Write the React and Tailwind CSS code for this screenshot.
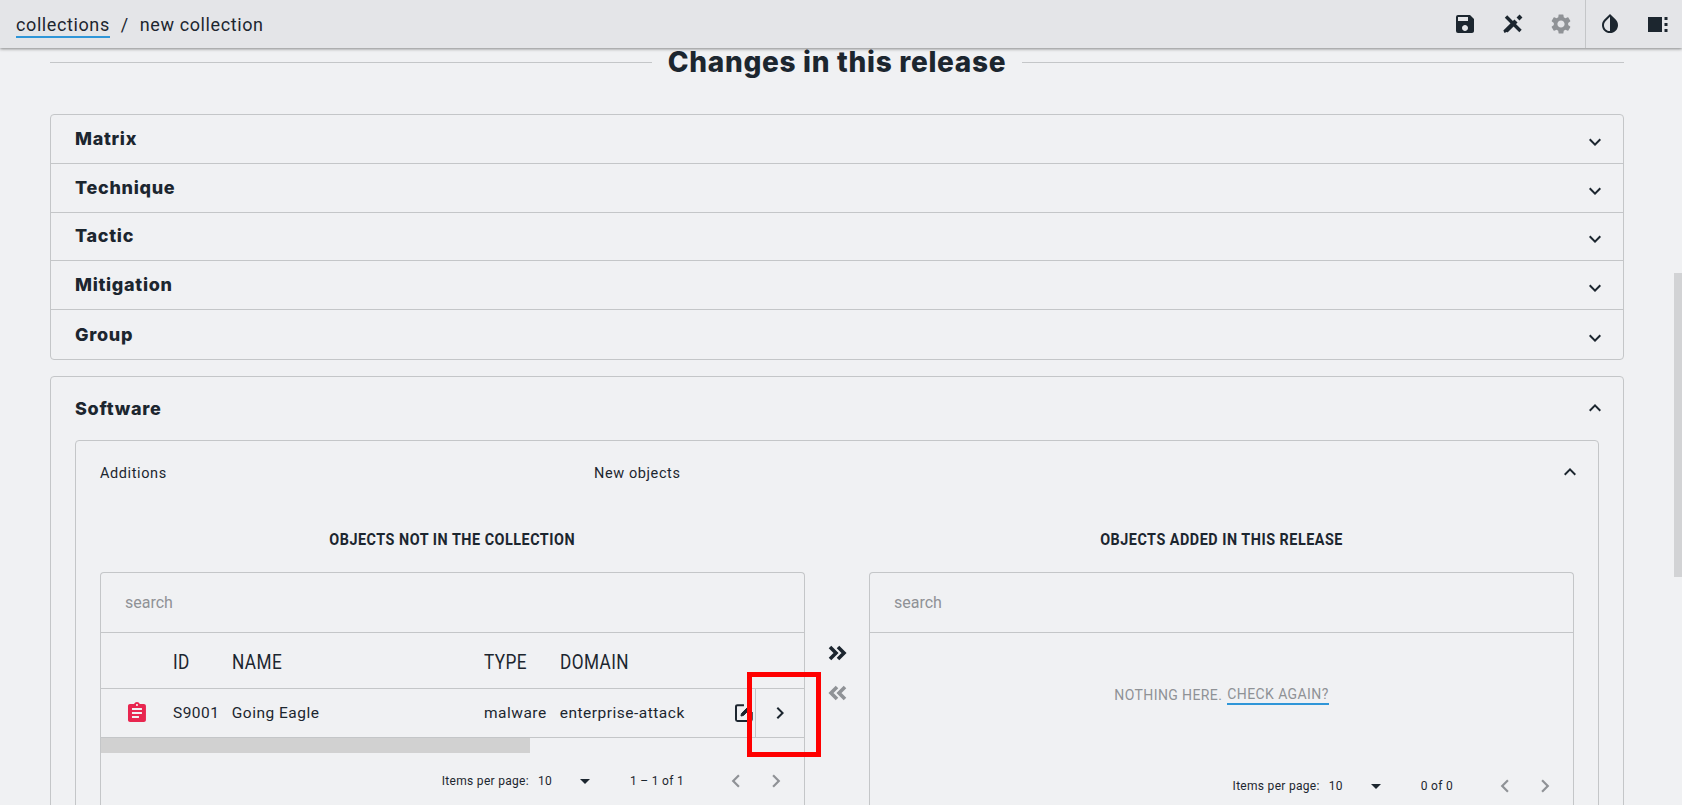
import React from "react";
import {
  MdSave, MdSettings, MdInvertColors, MdAssignment,
  MdKeyboardArrowDown, MdKeyboardArrowUp, MdChevronLeft, MdChevronRight,
  MdArrowDropDown,
} from "react-icons/md";

const roboto = { fontFamily: "Roboto, sans-serif" };
const display = { fontFamily: "Inter, sans-serif" };

function ToolIcon() {
  return (
    <svg width="24" height="24" viewBox="0 0 24 24" fill="none" stroke="#1c262f" strokeWidth="3">
      <path d="M5 4.5 L19.5 19" strokeWidth="3.4" />
      <path d="M5.5 20 L5 19 L15 9" strokeWidth="4.4" />
      <path d="M17 7 L20 4" strokeWidth="4" />
    </svg>
  );
}

function PanelIcon() {
  return (
    <svg width="20" height="15" viewBox="0 0 20 15" fill="#1c262f">
      <rect x="0" y="0" width="14" height="15" />
      <rect x="16.5" y="0" width="3" height="3" />
      <rect x="16.5" y="6" width="3" height="3" />
      <rect x="16.5" y="12" width="3" height="3" />
    </svg>
  );
}

function EditIcon() {
  return (
    <svg width="20" height="20" viewBox="0 0 20 20" fill="none" stroke="#1c262f">
      <path d="M10 2.2 H3.5 A1.5 1.5 0 0 0 2 3.7 V16.5 A1.5 1.5 0 0 0 3.5 18 H16.3 A1.5 1.5 0 0 0 17.8 16.5 V9" strokeWidth="2" />
      <path d="M7 13 L7.5 10.5 L15 3 L17 5 L9.5 12.5 Z" fill="#1c262f" strokeWidth="1" />
    </svg>
  );
}

function DoubleRight() {
  return (
    <svg width="20" height="16" viewBox="0 0 20 16" fill="none" stroke="currentColor" strokeWidth="3.6">
      <path d="M2 2 L8 8 L2 14" />
      <path d="M10 2 L16 8 L10 14" />
    </svg>
  );
}

function DoubleLeft() {
  return (
    <svg width="20" height="16" viewBox="0 0 20 16" fill="none" stroke="currentColor" strokeWidth="3.6">
      <path d="M10 2 L4 8 L10 14" />
      <path d="M18 2 L12 8 L18 14" />
    </svg>
  );
}

function Paginator({ range, className }) {
  return (
    <div className={"flex items-center justify-end pr-2 text-[12px] tracking-[0.3px] text-[#1c262f] " + className}>
      <span>Items per page:</span>
      <span className="ml-[9px] w-[35px]">10</span>
      <MdArrowDropDown size={24} className="mr-[33px]" />
      <span>{range}</span>
      <div className="ml-[32px] flex text-[#8f9296]">
        <span className="flex w-10 justify-center"><MdChevronLeft size={26} /></span>
        <span className="flex w-10 justify-center"><MdChevronRight size={26} /></span>
      </div>
    </div>
  );
}

function SearchRow() {
  return (
    <div className="flex h-[60px] items-center border-b border-[#c4c6c8] pl-6 pt-[1px] text-[16px] text-[#8f9296]">
      search
    </div>
  );
}

function Accordion({ title }) {
  return (
    <div className="flex h-[48.8px] items-center justify-between border-b border-[#c4c6c8] pl-6 pr-[16px] last:border-b-0">
      <span className="pb-[1px] text-[18px] font-extrabold tracking-[0.7px]" style={display}>{title}</span>
      <MdKeyboardArrowDown size={24} className="mt-[6px]" />
    </div>
  );
}

function Condensed({ children, className }) {
  return <span className={"inline-block origin-left scale-x-[0.86] whitespace-nowrap " + className}>{children}</span>;
}

function ListTitle({ children }) {
  return (
    <div className="h-[45px] text-center">
      <h2 className="inline-block scale-x-[0.87] whitespace-nowrap text-[16.5px] font-bold leading-[20px] tracking-[0.6px]">{children}</h2>
    </div>
  );
}

export default function App() {
  return (
    <div className="relative flex h-screen flex-col overflow-hidden bg-[#f0f1f3] text-[#1c262f]" style={roboto}>
      <header className="relative z-10 flex h-[48px] shrink-0 items-center justify-between bg-[#e4e5e8] pl-4 shadow-[0_1px_3px_rgba(0,0,0,0.45)]">
        <div className="flex items-baseline text-[18px] tracking-[0.6px]">
          <span className="border-b-2 border-[#2f96d8] leading-[22px]">collections</span>
          <span className="mx-[11px]">/</span>
          <span>new collection</span>
        </div>
        <div className="flex h-full items-center">
          <MdSave size={24} />
          <span className="ml-[24px]"><ToolIcon /></span>
          <MdSettings size={24} className="ml-[24px] text-[#8f9296]" />
          <div className="ml-[12px] flex h-full items-center border-l border-[#c4c6c8] pl-[12px] pr-[14px]">
            <MdInvertColors size={24} />
            <span className="ml-[26px]"><PanelIcon /></span>
          </div>
        </div>
      </header>

      <main className="min-h-0 flex-1 pl-[50px] pr-[58px]">
        <div className="flex h-[28px] items-center gap-4">
          <div className="h-px flex-1 bg-[#c4c6c8]" />
          <h1 className="text-[28px] font-extrabold leading-[28px] tracking-[0.7px]" style={display}>Changes in this release</h1>
          <div className="h-px flex-1 bg-[#c4c6c8]" />
        </div>

        <div className="mt-[38px] rounded border border-[#c4c6c8]">
          {["Matrix", "Technique", "Tactic", "Mitigation", "Group"].map((t) => (
            <Accordion key={t} title={t} />
          ))}
        </div>

        <section className="mt-[16px] rounded border border-[#c4c6c8] px-6">
          <div className="flex h-[63px] items-center justify-between">
            <span className="text-[18px] font-extrabold tracking-[0.7px]" style={display}>Software</span>
            <MdKeyboardArrowUp size={24} className="mr-[-8px]" />
          </div>

          <div className="rounded border border-[#c4c6c8] px-6">
            <div className="flex h-[66px] items-center justify-between text-[14.5px] tracking-[0.6px]">
              <div className="flex">
                <span className="w-[494px]">Additions</span>
                <span>New objects</span>
              </div>
              <MdKeyboardArrowUp size={24} className="mr-[-8px] mb-[4px]" />
            </div>

            <div className="grid grid-cols-[705px_64px_705px] pt-[21px]">
              <div>
                <ListTitle>OBJECTS NOT IN THE COLLECTION</ListTitle>
                <div className="-mt-[1px] rounded border border-b-0 border-[#c4c6c8]">
                  <SearchRow />
                  <div className="flex h-[56px] items-center border-b border-[#c4c6c8] pt-[3px] text-[20px] tracking-[0.5px]">
                    <Condensed className="ml-[72px] w-[59px]">ID</Condensed>
                    <Condensed className="w-[252px]">NAME</Condensed>
                    <Condensed className="w-[76px]">TYPE</Condensed>
                    <Condensed>DOMAIN</Condensed>
                  </div>
                  <div className="flex h-[49px] items-center border-b border-[#c4c6c8] text-[15.5px] tracking-[0.5px]">
                    <MdAssignment size={24} className="ml-[24px] mr-[24px] text-[#e8264f]" />
                    <span className="w-[59px] pt-[1px]">S9001</span>
                    <span className="w-[253px] pt-[1px]">Going Eagle</span>
                    <span className="w-[76px] pt-[1px]">malware</span>
                    <span className="w-[175px] whitespace-nowrap pt-[1px]">enterprise-attack</span>
                    <EditIcon />
                    <span className="ml-[1px] flex h-full w-[49px] items-center justify-center border-l border-[#c4c6c8]">
                      <MdChevronRight size={24} />
                    </span>
                  </div>
                  <div className="h-[15px] w-[429px] bg-[#d1d1d1]" />
                  <Paginator range="1 – 1 of 1" className="h-[56px]" />
                </div>
              </div>

              <div className="flex flex-col items-center pt-[70px] text-[#1c262f]">
                <span className="ml-[2px] mt-[47px] flex"><DoubleRight /></span>
                <span className="mt-[24px] flex text-[#8f9296]"><DoubleLeft /></span>
              </div>

              <div>
                <ListTitle>OBJECTS ADDED IN THIS RELEASE</ListTitle>
                <div className="-mt-[1px] rounded border border-b-0 border-[#c4c6c8]">
                  <SearchRow />
                  <div className="flex h-[125px] items-center justify-center text-[14px] tracking-[0.4px] text-[#8f9296]">
                    <span>NOTHING HERE.</span>
                    <span className="ml-[5px] border-b-2 border-[#2f96d8] leading-[18px]">CHECK AGAIN?</span>
                  </div>
                  <Paginator range="0 of 0" className="h-[56px]" />
                </div>
              </div>
            </div>
          </div>
        </section>
      </main>

      <div className="absolute right-0 top-[273px] h-[304px] w-2 bg-[#d2d3d5]" />
      <div className="absolute left-[747px] top-[672px] z-20 h-[85px] w-[74px] border-[5px] border-[#ff0000]" />
    </div>
  );
}
